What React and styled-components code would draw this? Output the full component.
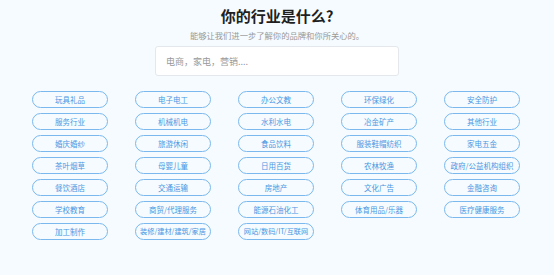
import styled, { createGlobalStyle } from 'styled-components';

const GlobalStyle = createGlobalStyle`
  html, body {
    margin: 0;
    padding: 0;
    background: #f5fbfe;
  }
  body {
    font-family: "Noto Sans CJK SC", "Noto Sans", sans-serif;
  }
`;

const industries = [
  '玩具礼品', '电子电工', '办公文教', '环保绿化', '安全防护',
  '服务行业', '机械机电', '水利水电', '冶金矿产', '其他行业',
  '婚庆婚纱', '旅游休闲', '食品饮料', '服装鞋帽纺织', '家电五金',
  '茶叶烟草', '母婴儿童', '日用百货', '农林牧渔', '政府/公益机构组织',
  '餐饮酒店', '交通运输', '房地产', '文化广告', '金融咨询',
  '学校教育', '商贸/代理服务', '能源石油化工', '体育用品/乐器', '医疗健康服务',
  '加工制作', '装修/建材/建筑/家居', '网站/数码/IT/互联网',
];

const Page = styled.section`
  width: 554px;
  height: 275px;
  box-sizing: border-box;
  padding-top: 6px;
  display: flex;
  flex-direction: column;
  align-items: center;
  background: #f5fbfe;
`;

const Title = styled.h1`
  margin: 0;
  font-size: 15px;
  line-height: 20px;
  font-weight: 700;
  color: #1f1f1f;
`;

const Subtitle = styled.p`
  margin: 3px 0 0;
  font-size: 8.3px;
  line-height: 12px;
  color: #999;
`;

const SearchInput = styled.input`
  margin-top: 5px;
  width: 244px;
  height: 30px;
  box-sizing: border-box;
  padding: 0 10px;
  border: 1px solid #e4e8ec;
  border-radius: 3px;
  background: #fff;
  font-family: inherit;
  font-size: 9px;
  color: #333;
  outline: none;
  &::placeholder {
    color: #9a9a9a;
  }
`;

const Grid = styled.div`
  margin-top: 15px;
  margin-right: 2px;
  display: grid;
  grid-template-columns: repeat(5, 76px);
  column-gap: 27px;
  row-gap: 5.5px;
`;

const Pill = styled.button`
  height: 16.5px;
  box-sizing: border-box;
  padding: 0 2px;
  border: 1px solid #7ab8ee;
  border-radius: 9px;
  background: transparent;
  font-family: inherit;
  font-size: ${(p) => (p.$long ? '7.2px' : '7.5px')};
  line-height: 1;
  color: #4a97e3;
  white-space: nowrap;
  display: flex;
  align-items: center;
  justify-content: center;
  cursor: pointer;
`;

const App = () => {
  return (
    <>
      <GlobalStyle />
      <Page>
        <Title>你的行业是什么?</Title>
        <Subtitle>能够让我们进一步了解你的品牌和你所关心的。</Subtitle>
        <SearchInput placeholder='电商，家电，营销....' />
        <Grid>
          {industries.map((name) => (
            <Pill key={name} $long={name.length > 9}>
              {name}
            </Pill>
          ))}
        </Grid>
      </Page>
    </>
  );
};

export default App;
